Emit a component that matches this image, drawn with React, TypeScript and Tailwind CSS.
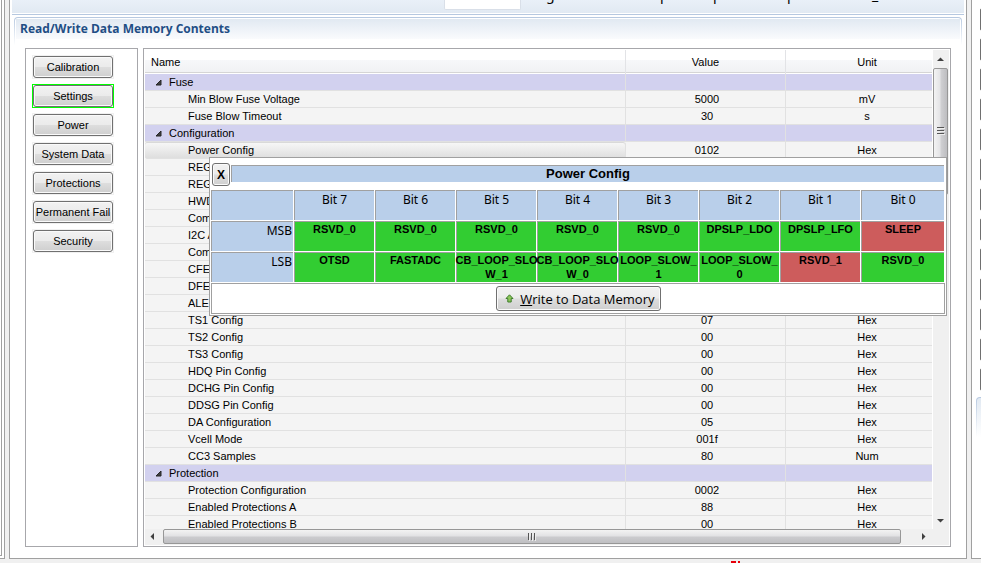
import React from "react";
import clsx from "clsx";

type Row = { name: string; value?: string; unit?: string; group?: boolean };

const rows: Row[] = [
  { name: "Fuse", group: true },
  { name: "Min Blow Fuse Voltage", value: "5000", unit: "mV" },
  { name: "Fuse Blow Timeout", value: "30", unit: "s" },
  { name: "Configuration", group: true },
  { name: "Power Config", value: "0102", unit: "Hex" },
  { name: "REG12 Config", value: "00", unit: "Hex" },
  { name: "REG0 Config", value: "00", unit: "Hex" },
  { name: "HWD Regulator Options", value: "00", unit: "Hex" },
  { name: "Comm Type", value: "00", unit: "Hex" },
  { name: "I2C Address", value: "00", unit: "Hex" },
  { name: "Comm Idle Time", value: "0", unit: "s" },
  { name: "CFETOFF Pin Config", value: "00", unit: "Hex" },
  { name: "DFETOFF Pin Config", value: "00", unit: "Hex" },
  { name: "ALERT Pin Config", value: "00", unit: "Hex" },
  { name: "TS1 Config", value: "07", unit: "Hex" },
  { name: "TS2 Config", value: "00", unit: "Hex" },
  { name: "TS3 Config", value: "00", unit: "Hex" },
  { name: "HDQ Pin Config", value: "00", unit: "Hex" },
  { name: "DCHG Pin Config", value: "00", unit: "Hex" },
  { name: "DDSG Pin Config", value: "00", unit: "Hex" },
  { name: "DA Configuration", value: "05", unit: "Hex" },
  { name: "Vcell Mode", value: "001f", unit: "Hex" },
  { name: "CC3 Samples", value: "80", unit: "Num" },
  { name: "Protection", group: true },
  { name: "Protection Configuration", value: "0002", unit: "Hex" },
  { name: "Enabled Protections A", value: "88", unit: "Hex" },
  { name: "Enabled Protections B", value: "00", unit: "Hex" },
];

const tabs = [
  "Calibration",
  "Settings",
  "Power",
  "System Data",
  "Protections",
  "Permanent Fail",
  "Security",
];

const bits = ["Bit 7", "Bit 6", "Bit 5", "Bit 4", "Bit 3", "Bit 2", "Bit 1", "Bit 0"];

const registers = [
  {
    label: "MSB",
    cells: ["RSVD_0", "RSVD_0", "RSVD_0", "RSVD_0", "RSVD_0", "DPSLP_LDO", "DPSLP_LFO", "SLEEP"],
  },
  {
    label: "LSB",
    cells: [
      "OTSD",
      "FASTADC",
      "CB_LOOP_SLO\nW_1",
      "CB_LOOP_SLO\nW_0",
      "LOOP_SLOW_\n1",
      "LOOP_SLOW_\n0",
      "RSVD_1",
      "RSVD_0",
    ],
  },
];

// bits that are currently set
const setBits = ["SLEEP", "RSVD_1"];

const buttonStyle =
  "rounded-[3px] border border-[#707070] bg-[linear-gradient(#f2f2f2_0%,#ebebeb_48%,#dddddd_52%,#cfcfcf_100%)] shadow-[inset_0_0_0_1px_#fafafa]";

const Arrow = ({ d }: { d: string }) => (
  <svg width="9" height="9" viewBox="0 0 9 9" className="shrink-0">
    <path d={d} fill="#404040" />
  </svg>
);

const Sidebar = () => (
  <nav className="w-[113px] shrink-0 border border-[#a7a7ab] bg-white pl-[7px] pt-[7px]">
    <ul className="flex w-20 flex-col gap-[7px]">
      {tabs.map((tab) => (
        <li
          key={tab}
          className={clsx(
            "flex h-[22px] outline-1",
            tab === "Settings" ? "outline-[#00ff00]" : "outline-[#f0f0f0]",
          )}
        >
          <button
            type="button"
            className={clsx(buttonStyle, "w-full whitespace-nowrap text-[11px] leading-4")}
          >
            {tab}
          </button>
        </li>
      ))}
    </ul>
  </nav>
);

const MemoryTable = () => (
  <table className="w-full table-fixed border-separate border-spacing-0 text-[11px] leading-4">
    <colgroup>
      <col />
      <col className="w-[160px]" />
      <col className="w-[146px]" />
    </colgroup>
    <thead>
      <tr className="h-6 bg-[linear-gradient(#ffffff_0%,#ffffff_40%,#f7f8fa_41%,#f1f2f4_91%,#d5d5d5_92%,#d5d5d5_96%,#ffffff_97%)]">
        <th className="border-r border-[#e2e3e6] pl-[6px] text-left font-normal">Name</th>
        <th className="border-r border-[#e2e3e6] text-center font-normal">Value</th>
        <th className="pl-4 text-center font-normal">Unit</th>
      </tr>
    </thead>
    <tbody>
      {rows.map((row) => (
        <tr key={row.name} className={row.group ? "bg-[#d2d1ef]" : "bg-[#f4f4f4]"}>
          <td
            className={clsx(
              "h-[17px] border-b border-r border-[#e1e1e1] p-0",
              row.name === "Power Config" &&
                "rounded-[2px] bg-[linear-gradient(#f8f8f8,#dedede)] shadow-[inset_0_1px_0_#d9d9d9]",
            )}
          >
            {row.group ? (
              <div className="flex items-center gap-[7px] pl-[10px]">
                <svg width="7" height="7" viewBox="0 0 7 7">
                  <path d="M6 1v5H1z" fill="#404040" stroke="#262626" />
                </svg>
                {row.name}
              </div>
            ) : (
              <div className="pl-[43px]">{row.name}</div>
            )}
          </td>
          <td className="border-b border-r border-[#e1e1e1] py-0 pl-[3px] pr-0 text-center">
            {row.value}
          </td>
          <td className="border-b border-[#e1e1e1] py-0 pl-4 pr-0 text-center">{row.unit}</td>
        </tr>
      ))}
    </tbody>
  </table>
);

const VerticalScroll = () => (
  <div className="flex w-4 shrink-0 flex-col bg-[#f0f0f0]">
    <div className="flex h-[18px] items-center pl-[3px]">
      <Arrow d="M1 6L4.500 2.500L8 6z" />
    </div>
    <div className="flex h-[127px] w-[15px] items-center justify-center rounded-[2px] border border-[#979797] bg-[linear-gradient(90deg,#f3f3f3_0%,#e4e4e6_45%,#cfcfd2_55%,#bdbdc0_100%)]">
      <svg width="8" height="9" viewBox="0 0 8 9">
        <path d="M0 .5h7M0 3.500h7M0 6.500h7" stroke="#555" />
        <path d="M1 1.500h7M1 4.500h7M1 7.500h7" stroke="#eee" />
      </svg>
    </div>
    <div className="mt-auto flex h-[18px] items-center pl-[3px]">
      <Arrow d="M1 3L4.500 6.500L8 3z" />
    </div>
  </div>
);

const HorizontalScroll = () => (
  <div className="mr-4 flex h-4 items-start bg-[#f0f0f0]">
    <div className="flex h-[15px] w-[18px] items-center pl-[3px]">
      <Arrow d="M6 1L2.500 4.500L6 8z" />
    </div>
    <div className="flex h-[15px] flex-1 items-center justify-center rounded-[2px] border border-[#979797] bg-[linear-gradient(#f3f3f3_0%,#e2e2e4_45%,#cbcbce_55%,#bfbfc2_100%)]">
      <svg width="9" height="8" viewBox="0 0 9 8">
        <path d="M.5 0v7M3.500 0v7M6.500 0v7" stroke="#555" />
        <path d="M1.500 1v7M4.500 1v7M7.500 1v7" stroke="#eee" />
      </svg>
    </div>
    <div className="flex h-[15px] w-8 items-center justify-end pr-[5px]">
      <Arrow d="M3 1L6.500 4.500L3 8z" />
    </div>
  </div>
);

const PowerConfig = () => (
  <div
    role="dialog"
    aria-label="Power Config"
    className="absolute left-[65px] right-[3px] top-[108px] border border-[#a0a0a0] bg-white pb-px pr-px"
  >
    <div className="flex h-8 items-start gap-px pl-[2px] pt-[5px]">
      <button
        type="button"
        className={clsx(buttonStyle, "h-[23px] w-[18px] text-[12px] font-bold leading-4")}
      >
        X
      </button>
      <h2 className="mr-px mt-[2px] h-[17px] flex-1 border-l border-t border-[#a0a0a0] bg-[#b9cfea] text-center text-[13px] font-bold leading-4">
        Power Config
      </h2>
    </div>
    <table className="-mt-px w-full table-fixed border-separate border-spacing-px">
      <colgroup>
        <col className="w-[82px]" />
        {bits.slice(1).map((bit) => (
          <col key={bit} className="w-[80px]" />
        ))}
        <col />
      </colgroup>
      <thead>
        <tr className="h-[30px] bg-[#b9cfea] align-top font-['Noto_Sans'] text-[12px] leading-[18px]">
          <td className="border-l border-t border-[#a0a0a0] p-0" />
          {bits.map((bit) => (
            <th key={bit} className="border-l border-t border-[#a0a0a0] p-0 font-normal">
              {bit}
            </th>
          ))}
        </tr>
      </thead>
      <tbody>
        {registers.map((reg) => (
          <tr key={reg.label} className="h-[30px] align-top">
            <th className="border-l border-t border-[#a0a0a0] bg-[#b9cfea] py-0 pl-0 pr-px text-right font-['Noto_Sans'] text-[12px] font-normal leading-[18px]">
              {reg.label}
            </th>
            {reg.cells.map((cell, i) => (
              <td
                key={i}
                className={clsx(
                  "whitespace-pre border-l border-t border-[#a0a0a0] p-0 text-center text-[11px] font-bold leading-[14px]",
                  setBits.includes(cell) ? "bg-[#cd5c5c]" : "bg-[#32cd32]",
                )}
              >
                <div className="-mx-[2px]">{cell}</div>
              </td>
            ))}
          </tr>
        ))}
      </tbody>
    </table>
    <div className="ml-px flex h-[31px] items-center justify-center border border-[#a0a0a0]">
      <button
        type="button"
        className={clsx(
          buttonStyle,
          "flex h-[25px] w-[165px] items-center justify-end gap-[6px] whitespace-nowrap pr-[5px] font-['Open_Sans'] text-[13px] leading-4",
        )}
      >
        <svg width="9" height="9" viewBox="0 0 9 9">
          <path d="M4.500 .8L8 4.500H6.200V8H2.800V4.500H1z" fill="#8cc65a" stroke="#3f7d2c" />
        </svg>
        <span>
          <u>W</u>rite to Data Memory
        </span>
      </button>
    </div>
  </div>
);

// bottom edge of the toolbar that scrolls above the section
const Toolbar = () => (
  <div className="ml-[2px] mr-[2px] h-[15px] border-b border-[#b6c8e0] bg-white pb-px">
    <div className="flex h-[13px] items-start overflow-hidden bg-[linear-gradient(#e9f0f8,#e1e9f2)] pl-[432px] text-[14px] leading-[14px]">
      <div className="h-[10px] w-[77px] shrink-0 rounded-b-[2px] border border-t-0 border-[#d9dfe8] bg-white" />
      <div className="-mt-3 flex font-['Noto_Sans']">
        <span className="ml-[25px] w-[114px]">g</span>
        <span className="w-[53px]">p</span>
        <span className="w-[74px]">p</span>
        <span className="w-[85px]">p</span>
        <span>_</span>
      </div>
    </div>
  </div>
);

const RightPane = () => (
  <div className="flex w-[10px] shrink-0 flex-col overflow-hidden border-b border-l border-[#a0a0a0] bg-white pt-2">
    <div className="flex flex-col gap-[7px] pl-[8px]">
      {Array.from({ length: 13 }).map((_, i) => (
        <div key={i} className="h-[23px] w-4 rounded-[2px] border border-[#707070] bg-[#eee]" />
      ))}
    </div>
    <div className="ml-1 mt-[6px] h-10 w-5 rounded-tl-[4px] bg-[linear-gradient(#b6c8e0,#ffffff)] pl-px pt-px">
      <div className="h-full rounded-tl-[3px] bg-[linear-gradient(#e1e9f2,#ffffff)]" />
    </div>
  </div>
);

const App = () => {
  return (
    <div className="min-h-screen overflow-hidden bg-[#f0f0f0] font-['Liberation_Sans',Arial,sans-serif] text-black">
      <div className="flex">
        <div className="flex w-[5px] shrink-0 border-b border-r border-[#a0a0a0] bg-white pb-[2px]">
          <div className="w-[2px] border-b border-r border-[#a0a0a0]" />
        </div>
        <main className="ml-1 mr-1 min-w-0 flex-1 border-x border-b border-[#a0a0a0] bg-white pb-[11px]">
          <Toolbar />
          <div className="ml-1 mr-1 mt-[2px] h-[31px] rounded-t-[4px] bg-[linear-gradient(#b6c8e0,#ffffff_28px)] px-px pt-px">
            <div className="h-full rounded-t-[3px] bg-white p-px">
              <h1 className="h-5 bg-[linear-gradient(#e1e9f2,#fafbfd)] pl-1 font-['Open_Sans'] text-[12px] font-bold leading-5 text-[#1f4e85]">
                Read/Write Data Memory Contents
              </h1>
            </div>
          </div>
          <div className="ml-[15px] mr-[15px] flex gap-[5px]">
            <Sidebar />
            <section className="relative min-w-0 flex-1 border border-[#a7a7ab] bg-white p-px">
              <div className="flex h-[479px] overflow-hidden">
                <div className="min-w-0 flex-1 pr-px">
                  <MemoryTable />
                </div>
                <VerticalScroll />
              </div>
              <div className="bg-[#f0f0f0]">
                <HorizontalScroll />
              </div>
              <PowerConfig />
            </section>
          </div>
        </main>
        <RightPane />
      </div>
      <div className="flex h-1 gap-[2px] pl-[731px] pt-[2px]">
        <span className="h-[2px] w-[5px] bg-red-600" />
        <span className="h-[2px] w-[2px] bg-red-600" />
      </div>
    </div>
  );
};

export default App;
